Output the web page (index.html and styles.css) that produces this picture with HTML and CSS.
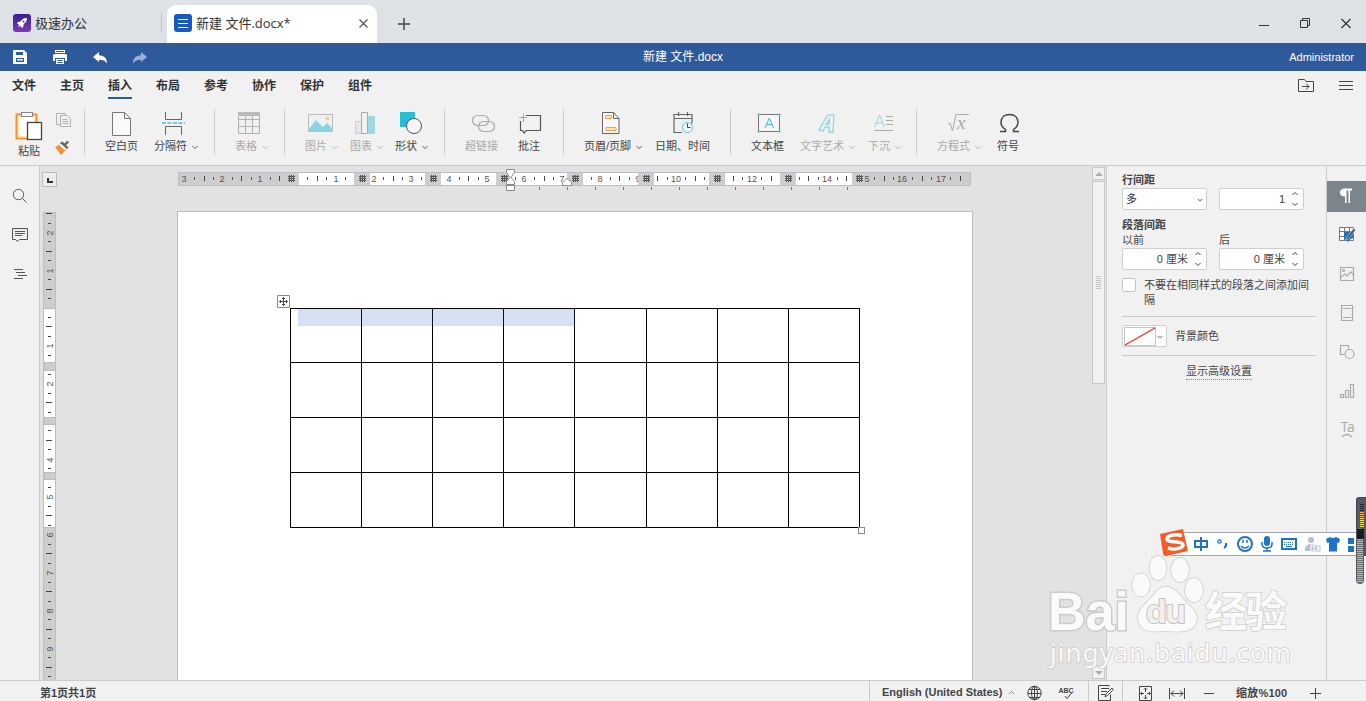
FILE: index.html
```html
<!DOCTYPE html>
<html lang="zh-CN">
<head>
<meta charset="utf-8">
<title>新建 文件.docx</title>
<link rel="stylesheet" href="styles.css">
</head>
<body>
<div class="app">
  <header class="titlebar">
    <div class="home-tab">
      <svg class="app-logo" viewBox="0 0 18 18"><defs><linearGradient id="pg" x2="0" y2="1"><stop stop-color="#3b1f8f"/><stop offset="1" stop-color="#7a3bb5"/></linearGradient></defs><rect width="18" height="18" rx="3" fill="url(#pg)"/><path d="M14 4c-3 0-5 1-6.500 3.500L5 8l-1 2 2 .3-.8 2.500L8 12l.2 2 2-1 .5-3C13 8.500 14 7 14 4z" fill="#fff"/><circle cx="10.500" cy="7.500" r="1" fill="#5a30a0"/></svg>
      <span>极速办公</span>
    </div>
    <div class="doc-tab">
      <svg class="app-logo" viewBox="0 0 18 18"><rect width="18" height="18" rx="3" fill="#185abd"/><path d="M4 5.500h10M4 9.500h10M4 13.500h10" stroke="#fff" stroke-width="1"/></svg>
      <span class="doc-name">新建 文件.docx*</span>
      <svg class="tab-close" viewBox="0 0 9 9"><path d="M.5.5l8 8M8.500.5l-8 8" stroke="#555" stroke-width="1.200"/></svg>
    </div>
    <svg class="tab-add" viewBox="0 0 12 12"><path d="M6 0v12M0 6h12" stroke="#444" stroke-width="1.500"/></svg>
    <svg class="window-buttons" viewBox="1250 10 116 28"><g fill="none" stroke="#333"><path d="M1259 25.500h10"/><path d="M1300.500 20.500h7v7h-7zM1302.500 20v-1.500h7v7h-2" /><path d="M1341.500 19l9 9M1350.500 19l-9 9" stroke-width="1.200"/></g></svg>
  </header>

  <div class="quickbar">
    <svg class="quick-icons" viewBox="0 43 160 28">
      <path fill="#fff" fill-rule="evenodd" d="M14 50h10l3 3v10q0 1-1 1H14q-1 0-1-1V51q0-1 1-1zm2 2v3h7v-3zm0 6v4h8v-4zM17 59h6v1.500h-6z"/>
      <path fill="#fff" fill-rule="evenodd" d="M55 50h10v3H55zM54 54h12l1 1v6h-2v-3H55v3h-2v-6zM56 59h8v5h-8z"/><path stroke="#2e5a9c" d="M57.500 60.500h5M57.500 62.500h5M56 51.500h8"/>
      <path fill="#fff" d="M93 57l6-5v3.200c5 .2 8 3 8 8-2-2.500-4-3.500-8-3.500V62z"/>
      <path fill="#9cb0d2" d="M147 57l-6-5v3.200c-5 .2-8 3-8 8 2-2.500 4-3.500 8-3.500V62z"/>
    </svg>
    <span class="quick-title">新建 文件.docx</span>
    <span class="user-name">Administrator</span>
  </div>

  <nav class="menu">
    <a>文件</a><a>主页</a><a class="active">插入</a><a>布局</a><a>参考</a><a>协作</a><a>保护</a><a>组件</a>
    <svg class="menu-icons" viewBox="1290 71 76 30"><g fill="none" stroke="#444"><path d="M1298.500 79.500h6l1.500 2h7.500v10h-15zM1302 86.500h7M1306 83.500l3 3-3 3M1339 81.500h14M1339 85.500h14M1339 89.500h14"/></g></svg>
  </nav>

  <div class="ribbon">
    <div class="tool paste">
      <svg viewBox="12 107 35 36"><path d="M16.500 114.500h20v24h-20z" fill="#fff" stroke="#ef9034" stroke-width="2"/><path d="M18.500 116.500h16v20h-16z" fill="none" stroke="#fbe3b0"/><rect x="21.500" y="112.500" width="11" height="4" fill="#f6f6f6" stroke="#888"/><rect x="27.500" y="122.500" width="14" height="17" fill="#fff" stroke="#444" stroke-width="1.300"/></svg>
      <span>粘贴</span>
    </div>
    <div class="mini-tools">
      <svg viewBox="54 106 20 54"><g fill="#f1f1f1" stroke="#b2b2b2"><path d="M56.500 113.500h9v11h-9z"/><path d="M60.500 115.500h7l3 3v8h-10zM62.500 119.500h5M62.500 121.500h6M62.500 123.500h6"/></g><path d="M55 147l4-2 6 6-4 4z" fill="#ef9034"/><path d="M59 145l2-2 6 5-2 3z" fill="#fff" stroke="#ef9034" stroke-width=".7"/><path d="M60 143l7 6 1.500-1.500-2.500-2.500 3-2.500-1.500-2-3 3-2-2z" fill="#666"/></svg>
    </div>
    <i class="sep"></i>
    <div class="tool w49"><svg viewBox="105 107 49 32"><path d="M112.500 112.500h12l6 6v17h-18zM124.500 112.500v6h6" fill="#fff" fill-opacity=".6" stroke="#777"/></svg><span>空白页</span></div>
    <div class="tool w60"><svg viewBox="154 107 60 32"><path d="M165.500 112v7.500h16v-7.500M165.500 135v-8.500h16v8.500" fill="none" stroke="#666"/><path d="M162 123h23" stroke="#73cbd8" stroke-width="2" stroke-dasharray="4 1.500"/></svg><span>分隔符<b></b></span></div>
    <i class="sep"></i>
    <div class="tool w49 off"><svg viewBox="235 107 49 32"><path d="M238.500 112.500h21v21h-21zM238.500 119.500h21M238.500 126.500h21M245.500 115v18M252.500 115v18" fill="none" stroke="#b0b0b0"/><path d="M238 112h22v4h-22z" fill="#bbb"/></svg><span>表格<b></b></span></div>
    <i class="sep"></i>
    <div class="tool w45 off"><svg viewBox="305 107 45 32"><path d="M308.500 114.500h24v17h-24z" fill="#eef2f2" stroke="#bababa"/><path d="M309 129l7-9 7 7 4-4 5 5v3h-23z" fill="#8dd5df"/><circle cx="327.500" cy="118.500" r="2" fill="#f7ca9c"/></svg><span>图片<b></b></span></div>
    <div class="tool w45 off"><svg viewBox="350 107 45 32"><path d="M355.500 121.500h6v12h-6z" fill="#e7e7e7" stroke="#ccc"/><path d="M361.500 112.500h6v21h-6z" fill="#f1f1f1" stroke="#aaa"/><path d="M368 116h7v18h-7z" fill="#9cdae2"/></svg><span>图表<b></b></span></div>
    <div class="tool w49"><svg viewBox="395 107 49 32"><path d="M400 112h15v15h-15z" fill="#27bdd5"/><circle cx="414" cy="126" r="7.500" fill="#f5f5f5" stroke="#555"/></svg><span>形状<b></b></span></div>
    <i class="sep"></i>
    <div class="tool w53 off"><svg viewBox="465 107 53 32"><g fill="none" stroke="#aaa" stroke-width="1.200"><rect x="472.500" y="115.500" width="16" height="10" rx="5"/><rect x="478.500" y="121.500" width="16" height="10" rx="5"/></g></svg><span>超链接</span></div>
    <div class="tool w45"><svg viewBox="518 107 45 32"><path d="M526 115.500h14.500v15h-14l-2.500 2.500-1.500-2.500h-2V121" fill="none" stroke="#555" stroke-width="1.200"/><path d="M523.500 114v8M519 117.500h8" stroke="#56c7d7"/></svg><span>批注</span></div>
    <i class="sep"></i>
    <div class="tool w71"><svg viewBox="584 107 71 32"><path d="M602.500 112.500h11l5.500 6v15h-16.500zM613.500 112.500v6h5.500" fill="#fff" fill-opacity=".5" stroke="#666"/><path d="M605.500 115.500h6v3h-6zM606 127.500h10v3h-10z" fill="#ffe8b5" stroke="#f0a24c"/></svg><span>页眉/页脚<b></b></span></div>
    <div class="tool w75"><svg viewBox="655 107 75 32"><path d="M682 132.500h-8v-18h18v9M674 118.500h18M678.500 112v4M687.500 112v4" fill="none" stroke="#666" stroke-width="1.200"/><circle cx="687.500" cy="127.500" r="5" fill="#f5f5f5" stroke="#56c7d7"/><path d="M687.500 123.500v4h3" fill="none" stroke="#444"/></svg><span>日期、时间</span></div>
    <i class="sep"></i>
    <div class="tool w49"><svg viewBox="751 107 49 32"><path d="M758.500 114.500h21v17h-21z" fill="#f5f5f5" stroke="#777"/><path d="M765 128l4.300-10 4.300 10M766.500 124.500h5.500" fill="none" stroke="#38bfd1"/><path d="M757.500 113.500h2v2h-2zM778.500 113.500h2v2h-2zM757.500 130.500h2v2h-2zM778.500 130.500h2v2h-2z" fill="#56c7d7"/></svg><span>文本框</span></div>
    <div class="tool w68 off"><svg viewBox="800 107 68 32"><path d="M819 130l8-14q4-2 7-1l-1 17h-4v-5h-4l-2 4zM826 124h3l.5-5z" fill="none" stroke="#93d8e1" stroke-width="1.300"/></svg><span>文字艺术<b></b></span></div>
    <div class="tool w49 off"><svg viewBox="868 107 49 32"><path d="M874.500 127l5-12 5 12M876 123h7" fill="none" stroke="#93d8e1"/><path d="M886 116.500h7M886 120.500h7M886 124.500h7M874 130.500h19" stroke="#aaa"/></svg><span>下沉<b></b></span></div>
    <i class="sep nudge"></i>
    <div class="tool w60 off"><svg viewBox="937 107 60 32"><path d="M948 124l2-1 2.500 8 3.500-16.500h13" fill="none" stroke="#aaa"/><text x="957" y="129" class="math">x</text></svg><span>方程式<b></b></span></div>
    <div class="tool w49"><svg viewBox="997 107 49 32"><path d="M1000 131.500h5.500v-2c-3-2-4.500-4-4.500-7 0-5 3.500-8 8.500-8s8.500 3 8.500 8c0 3-1.500 5-4.500 7v2h5.500" fill="none" stroke="#444" stroke-width="1.500"/></svg><span>符号</span></div>
  </div>

  <main class="workspace">
    <aside class="leftbar">
      <svg viewBox="0 166 39 130"><g fill="none" stroke="#555"><circle cx="18.500" cy="194.500" r="5.200"/><path d="M22.500 198.500l4 4"/><path d="M12.500 228.500h15v11h-8l-2 2-2-2h-3zM15 231.500h10M15 233.500h10M15 235.500h7M14 269.500h9M16 272.500h9M18 275.500h9M14 278.500h9"/></g></svg>
    </aside>

    <section class="canvas">
      <div class="corner"><svg viewBox="0 0 15 15"><path d="M.5.5h14v14H.5z" fill="#ededed" stroke="#bbb"/><path d="M6 6v4h5" fill="none" stroke="#333" stroke-width="2"/></svg></div>
      <svg class="ruler-h" viewBox="177 166 796 30" shape-rendering="crispEdges">
        <defs><path id="grid" d="M0 1.500h7M0 3.500h7M0 5.500h7M1.500 0v7M3.500 0v7M5.500 0v7" stroke="#555" fill="none"/></defs>
        <path d="M178 172h793v14H178z" fill="#cdcdcd"/><path d="M299 172h553v14H299z" fill="#fff"/>
        <path d="M194 178.500h770" stroke="#555" stroke-width="3" stroke-dasharray="1 17.900"/>
        <path d="M203.500 178.500h762" stroke="#444" stroke-width="5" stroke-dasharray="1 36.800"/>
        <g class="digits"><text x="184" y="182">3</text><text x="222" y="182">2</text><text x="260" y="182">1</text><text x="336" y="182">1</text><text x="374" y="182">2</text><text x="411" y="182">3</text><text x="449" y="182">4</text><text x="487" y="182">5</text><text x="524" y="182">6</text><text x="562" y="182">7</text><text x="600" y="182">8</text><text x="638" y="182">9</text><text x="676" y="182">10</text><text x="752" y="182">12</text><text x="827" y="182">14</text><text x="902" y="182">16</text><text x="941" y="182">17</text></g>
        <path d="M287 172h12v14h-12zM354 172h16v14h-16zM425 172h16v14h-16zM496 172h16v14h-16zM567 172h16v14h-16zM638 172h16v14h-16zM709 172h16v14h-16zM780 172h16v14h-16zM852 172h12v14h-12z" fill="#cdcdcd"/>
        <text class="digit" x="867" y="182">5</text>
        <g><use href="#grid" x="288" y="175"/><use href="#grid" x="359" y="175"/><use href="#grid" x="430" y="175"/><use href="#grid" x="501" y="175"/><use href="#grid" x="572" y="175"/><use href="#grid" x="643" y="175"/><use href="#grid" x="714" y="175"/><use href="#grid" x="785" y="175"/><use href="#grid" x="856" y="175"/></g>
        <path d="M178.500 172.500h792v13h-792z" fill="none" stroke="#bbbec2"/>
        <path d="M539 188.500h309" stroke="#777" stroke-width="3" stroke-dasharray="1 27"/>
        <g fill="#fff" stroke="#848c94" shape-rendering="auto"><path d="M506.500 169.500h8v3l-3.500 5 3.500 4v3h-8v-3l3.500-4-3.500-5zM506.500 185.500h8v5h-8zM562.500 185.500v-3l4.500-4 4.500 4v3z"/></g>
      </svg>
      <svg class="ruler-v" viewBox="43 212 14 469" shape-rendering="crispEdges">
        <path d="M43 212h13v469H43z" fill="#cdcdcd"/><path d="M44 309h11v218H44z" fill="#fff"/>
        <path d="M49 222.500v456" stroke="#444" stroke-width="3" stroke-dasharray="1 17.900"/>
        <path d="M49 213v456" stroke="#444" stroke-width="6" stroke-dasharray="1 36.800"/>
        <path d="M44 362h11v8H44zM44 417h11v7H44zM44 472h11v7H44z" fill="#cdcdcd" stroke="#bbbec2"/>
        <g class="digits"><text transform="translate(53 233) rotate(-90)">2</text><text transform="translate(53 271) rotate(-90)">1</text><text transform="translate(53 346) rotate(-90)">1</text><text transform="translate(53 384) rotate(-90)">2</text><text transform="translate(53 460) rotate(-90)">4</text><text transform="translate(53 497) rotate(-90)">5</text><text transform="translate(53 535) rotate(-90)">6</text><text transform="translate(53 573) rotate(-90)">7</text><text transform="translate(53 611) rotate(-90)">8</text><text transform="translate(53 649) rotate(-90)">9</text></g>
        <path d="M43.500 681V212.500h12V681M44 308.500h12M44 527.500h12" fill="none" stroke="#bbbec2"/>
      </svg>
      <div class="page">
        <div class="table">
          <div></div><div></div><div></div><div></div><div></div><div></div><div></div><div></div>
          <div></div><div></div><div></div><div></div><div></div><div></div><div></div><div></div>
          <div></div><div></div><div></div><div></div><div></div><div></div><div></div><div></div>
          <div></div><div></div><div></div><div></div><div></div><div></div><div></div><div></div>
          <span class="selection"></span>
          <svg class="move-handle" viewBox="0 0 13 13"><path d="M.5.5h12v12H.5z" fill="#fff" stroke="#888"/><path d="M6.500 2.500v8M2.500 6.500h8M5 4l1.500-1.500L8 4M5 9l1.500 1.500L8 9M4 5L2.500 6.500 4 8M9 5l1.500 1.500L9 8" fill="none" stroke="#444"/></svg>
          <span class="size-handle"></span>
        </div>
      </div>
      <div class="scrollbar">
        <div class="scroll-btn"><svg viewBox="0 0 8 4"><path d="M0 4l4-4 4 4z" fill="#adadad"/></svg></div>
        <div class="thumb"><i></i></div>
        <div class="scroll-btn"><svg viewBox="0 0 8 4"><path d="M0 0l4 4 4-4z" fill="#adadad"/></svg></div>
      </div>
    </section>

    <aside class="panel">
      <h3>行间距</h3>
      <div class="fields"><div class="field select"><span>多</span><b></b></div><div class="field spin"><span>1</span><svg viewBox="0 0 6 14"><path d="M.5 3L3 .5 5.500 3M.5 11L3 13.500 5.500 11" fill="none" stroke="#444"/></svg></div></div>
      <h3 class="second">段落间距</h3>
      <div class="field-labels"><span>以前</span><span>后</span></div>
      <div class="fields"><div class="field spin"><span>0 厘米</span><svg viewBox="0 0 6 14"><path d="M.5 3L3 .5 5.500 3M.5 11L3 13.500 5.500 11" fill="none" stroke="#444"/></svg></div><div class="field spin"><span>0 厘米</span><svg viewBox="0 0 6 14"><path d="M.5 3L3 .5 5.500 3M.5 11L3 13.500 5.500 11" fill="none" stroke="#444"/></svg></div></div>
      <div class="check"><i></i><span>不要在相同样式的段落之间添加间隔</span></div>
      <div class="color-row"><div class="color"><svg viewBox="0 0 32 19"><path d="M.5.5h31v18H.5z" fill="#fff" stroke="#c4c4c4"/><path d="M1 18L31 1" stroke="#f22" stroke-width="1.200"/></svg><b></b></div><span>背景颜色</span></div>
      <div class="advanced"><span>显示高级设置</span></div>
    </aside>

    <aside class="rightbar">
      <svg viewBox="1327 166 39 300">
        <path d="M1327 181h39v31h-39z" fill="#7d858c"/><path d="M1352 188.500h-7c-3 0-5 1.500-5 4s2 4 5 4V203h1.500v-12.500h2V203h1.500v-12.500h2z" fill="#fff"/>
        <path d="M1339.500 227.500h14v13h-14zM1339.500 231.500h14M1339.500 236.500h14M1344.500 227v13M1349.500 227v13" fill="#fafafa" stroke="#777"/><path d="M1344 232h9v6l-4 2-1 2-4-3z" fill="#1c73c4"/><path d="M1354 228l1.500 2-7 9-3 1 1.500-3z" fill="#555" stroke="#f1f1f1" stroke-width=".5"/>
        <g fill="none" stroke="#aaa" stroke-width="1.200"><path d="M1340.500 267.500h13v13h-13zM1341 277l4-3 2 2 4-4 3 4"/><circle cx="1343.500" cy="270.500" r="1"/><path d="M1341.500 305.500h11v15h-11zM1343 308.500h8M1343 317.500h8"/><path d="M1344 354.500h-3.500v-9h8v3"/><circle cx="1349.500" cy="354" r="4.500"/><path d="M1340.500 394.500h3v3h-3zM1345.500 390.500h3v7h-3zM1350.500 384.500h3v13h-3z"/><path d="M1342 437q5-5 10 0"/></g><text class="ta" x="1340.500" y="432">Ta</text>
      </svg>
    </aside>
  </main>

  <footer class="status">
    <span class="page-count">第1页共1页</span>
    <span class="language">English (United States)</span>
    <svg class="status-icons" viewBox="1004 681 224 20"><g fill="none" stroke="#444"><path d="M1009 694l2.500-2.500 2.500 2.500" stroke="#888"/><circle cx="1034.500" cy="693" r="6.700"/><ellipse cx="1034.500" cy="693" rx="3" ry="6.700"/><path d="M1028 693.500h13M1034.500 686v14M1029 689.500h11M1029 697.500h11"/><path d="M1065 696l2 2.500 5-6"/><path d="M1109 686.500v-1h-10.500v15h12v-6M1101 688.500h8M1101 691.500h6M1101 694.500h4"/><path d="M1105 697l1-3 6-6 1.500 1.500-6 6z"/><path d="M1139.500 686.500h12v14h-12zM1145.500 688v4M1145.500 695v4M1141 693.500h3M1147 693.500h3M1144 689.500l1.500-1.500 1.500 1.500M1144 697.500l1.500 1.500 1.500-1.500M1142 692l-1.500 1.500 1.500 1.500M1149 692l1.500 1.500-1.500 1.500"/><path d="M1169.500 688v11M1184.500 688v11M1171 693.500h12M1174 690.500l-3 3 3 3M1180 690.500l3 3-3 3M1204 693.500h10"/></g><path d="M1088.500 681v20M1122.500 681v20" stroke="#cbcbcb"/><text class="abc" x="1058.500" y="693">ABC</text></svg>
    <span class="zoom-level">缩放%100</span>
    <svg class="zoom-in" viewBox="0 0 11 11"><path d="M5.500 0v11M0 5.500h11" stroke="#444"/></svg>
  </footer>

  <svg class="watermark" viewBox="1040 550 260 125">
    <g class="mark">
      <text x="1048" y="630" textLength="81" lengthAdjust="spacingAndGlyphs" class="bai">Bai</text>
      <ellipse cx="1141" cy="585" rx="9" ry="11.500"/><ellipse cx="1158" cy="568" rx="8.500" ry="12"/><ellipse cx="1180" cy="570" rx="9" ry="12"/><ellipse cx="1194" cy="590" rx="9" ry="12"/><path d="M1166 587c-9 0-11 8-19 15-8 7-11 14-8 21 4 10 15 9 27 8 12 1 23 2 29-6 5-8 0-15-8-22-8-8-11-16-21-16z"/>
      <text x="1205" y="627" textLength="82" class="exp">经验</text>
      <text x="1050" y="662" textLength="241" class="url">jingyan.baidu.com</text>
    </g>
    <text x="1146" y="623" textLength="40" class="du">du</text>
  </svg>

  <svg class="ime" viewBox="1155 495 211 95">
    <path d="M1172 532.500h194v23h-194z" fill="#fff" stroke="#a2a6b4"/>
    <path d="M1160 534l23-5 5 22-22 5q-3 0-3-3z" fill="#f65b25"/><path d="M1182 535.500c-7-2-15 0-15 3.500 0 4 16 1.500 16 6 0 3.500-9 5-15 3" fill="none" stroke="#fff" stroke-width="3.500"/>
    <g fill="none" stroke="#1e73c8" stroke-width="2"><path d="M1195 541h12v6h-12zM1201 537v14"/><circle cx="1219.500" cy="541.500" r="1.700" stroke-width="1.300"/><path d="M1226 543q1 3-2 5"/><circle cx="1245" cy="544" r="7"/><path d="M1241 546q4 4 8 0M1243 540v3M1247 540v3" stroke-width="1.500"/><path d="M1262 542v2q0 4 5 4t5-4v-2M1267 548v3M1263 551h8" stroke-width="1.500"/><path d="M1282 539h14v10h-14z"/><path d="M1284 542.500h10M1284 544.500h10" stroke-width="1" stroke-dasharray="1 1"/><path d="M1286 546.500h6" stroke-width="1"/></g>
    <rect x="1264" y="536" width="6" height="10" rx="3" fill="#1e73c8"/><g fill="#b6c0d3"><circle cx="1311" cy="540" r="3"/><path d="M1305 551v-4l4-3h5l3 3v4z"/><rect x="1311" y="545" width="10" height="7" stroke="#fff"/></g><text x="1312" y="551" class="nineteen">19</text>
    <path d="M1326 539l4-2q3 2 6 0l4 2-1 4-2-.5v9h-8v-9l-2 .5zM1348 538h6v6h-6zM1348 546h6v6h-6z" fill="#1e73c8"/>
    <rect x="1356.500" y="497.500" width="15" height="58" rx="2" fill="#555965" stroke="#42454e"/><path d="M1362 504v8" stroke="#252830" stroke-width="4" stroke-dasharray="1 1"/><path d="M1362 512v7" stroke="#f5a94d" stroke-width="4" stroke-dasharray="1 1"/><path d="M1362 518v10" stroke="#f2e04c" stroke-width="4" stroke-dasharray="1 1"/><path d="M1362 528v26" stroke="#437c3a" stroke-width="4" stroke-dasharray="1 1"/>
    <rect x="1356.500" y="527.500" width="7" height="56" rx="3" fill="#6e6e73" stroke="#565961"/><path d="M1357 529h7v10h-7z" fill="#181b20"/><path d="M1360 539v43" stroke="#f2aa4d" stroke-width="6" stroke-dasharray="1 1"/>
  </svg>
</div>
</body>
</html>
```
FILE: styles.css
```css
* { box-sizing: border-box; }
body { margin: 0; overflow: hidden; background: #f1f1f1; color: #444; font: 11px/15px "Liberation Sans", "Noto Sans CJK SC", sans-serif; }
.app { position: relative; width: 1366px; height: 701px; display: flex; flex-direction: column; overflow: hidden; }
svg { display: block; flex: none; }
.titlebar { height: 43px; flex: none; display: flex; background: #dee1e6; font-family: "Open Sans", "Noto Sans CJK SC", sans-serif; font-size: 13px; color: #333; }
.home-tab { width: 162px; height: 20px; margin: 13px 5px 0 0; padding-left: 13px; display: flex; align-items: center; gap: 4px; border-right: 1px solid #bfc2c7; }
.app-logo { width: 18px; height: 18px; }
.doc-tab { width: 210px; margin-top: 5px; padding: 0 9px 2px 7px; display: flex; align-items: center; gap: 4px; background: #fff; border-radius: 9px 9px 0 0; white-space: nowrap; }
.doc-name { flex: 1; }
.tab-close { width: 9px; height: 9px; }
.tab-add { width: 12px; height: 12px; margin: 18px 0 0 21px; }
.window-buttons { width: 116px; height: 28px; margin: 10px 0 0 auto; }
.quickbar { height: 28px; flex: none; display: grid; grid-template-columns: 1fr auto 1fr; align-items: center; background: #2e5a9c; color: #fff; font-size: 12px; }
.quick-icons { width: 160px; height: 28px; }
.user-name { justify-self: end; padding-right: 12px; font-size: 11px; }
.menu { height: 32px; flex: none; display: flex; gap: 24px; padding-left: 12px; }
.menu a { width: 24px; height: 28px; padding-top: 7px; color: #333; font-size: 12px; line-height: 16px; font-weight: bold; white-space: nowrap; }
.menu .active { border-bottom: 2px solid #2e5a9c; }
.menu-icons { width: 76px; height: 30px; margin-left: auto; }
.ribbon { height: 63px; flex: none; display: flex; padding: 4px 0 0 12px; border-bottom: 1px solid #cbcbcb; }
.tool { flex: none; white-space: nowrap; }
.tool svg { width: 100%; height: 32px; }
.tool span { display: flex; align-items: center; line-height: 15px; gap: 5px; }
.paste { width: 42px; }
.tool.paste svg { width: 35px; height: 36px; }
.paste span { padding: 1px 0 0 6px; }
.mini-tools { width: 30px; }
.mini-tools svg { width: 20px; height: 54px; margin-top: -1px; }
.sep { width: 1px; height: 46px; margin: 2px 20px 0 0; flex: none; background: #cbcbcb; }
.sep.nudge { margin-left: -1px; }
.w45 { width: 45px; } .w49 { width: 49px; } .w53 { width: 53px; } .w60 { width: 60px; } .w68 { width: 68px; } .w71 { width: 71px; } .w75 { width: 75px; }
.off { color: #aaa; }
b { width: 6px; height: 3px; background: currentColor; opacity: .75; clip-path: polygon(0 0, 16% 0, 50% 68%, 84% 0, 100% 0, 100% 12%, 50% 100%, 0 12%); transform: translateY(1px); }
.math { font: italic 19px "Liberation Serif", serif; fill: #aaa; }
.workspace { height: 514px; flex: none; display: flex; }
.leftbar { width: 40px; border-right: 1px solid #cbcbcb; }
.leftbar svg { width: 39px; height: 130px; }
.canvas { width: 1066px; display: grid; grid-template: 45px 469px / 137px 1fr 15px; background: #e2e2e2; overflow: hidden; }
.corner { padding: 6px 0 0 2px; }
.corner svg { width: 15px; height: 15px; }
.ruler-h { width: 796px; height: 30px; }
.ruler-v { grid-row: 2; grid-column: 1; width: 14px; height: 469px; margin: 1px 0 0 3px; }
.digits text, .digit { font: 9px "Liberation Sans", sans-serif; fill: #555; text-anchor: middle; }
.page { grid-row: 2; grid-column: 2; width: 796px; padding: 96px 0 0 112px; background: #fff; border: 1px solid #bbbec2; border-bottom: 0; }
.table { position: relative; width: 570px; height: 220px; display: grid; grid-template: 54px 55px 55px 55px / 71px 71px 71px 71px 72px 71px 71px 71px; border: solid #000; border-width: 0 1px 1px 0; }
.table > div { border: solid #000; border-width: 1px 0 0 1px; }
.selection { position: absolute; left: 8px; top: 1px; width: 277px; height: 17px; background: rgba(45, 100, 200, .2); }
.move-handle { position: absolute; left: -13px; top: -13px; width: 13px; height: 13px; }
.size-handle { position: absolute; left: 568px; top: 219px; width: 7px; height: 7px; border: 1px solid #888; background: #fff; }
.scrollbar { grid-row: 1 / 3; grid-column: 3; padding: 1px; display: flex; flex-direction: column; }
.scroll-btn { width: 13px; height: 13px; display: grid; place-items: center; border: 1px solid #c9c9c9; background: #f1f1f1; }
.scroll-btn svg { width: 8px; height: 4px; }
.thumb { height: 203px; margin: 1px 0 auto; border: 1px solid #c9c9c9; background: #f1f1f1; display: grid; place-items: center; }
.thumb i { width: 5px; height: 13px; background: repeating-linear-gradient(#c5c5c5 0 1px, transparent 1px 2px); }
.panel { width: 221px; padding: 7px 10px 0 15px; border: solid #cbcbcb; border-width: 0 1px; }
.panel h3 { margin: 0; font-size: 11px; line-height: 15px; }
.panel h3.second { margin-top: 8px; }
.fields { display: flex; gap: 12px; }
.field { width: 85px; height: 22px; display: flex; align-items: center; border: 1px solid #cfcfcf; border-radius: 2px; background: #fff; }
.select { justify-content: space-between; padding: 0 3px; color: #333; }
.spin { justify-content: flex-end; gap: 7px; padding-right: 5px; }
.spin svg { width: 6px; height: 14px; }
.field-labels { display: grid; grid-template-columns: 97px 1fr; height: 15px; }
.check { display: flex; gap: 8px; height: 47px; padding-top: 8px; border-bottom: 1px solid #cbcbcb; }
.check i { width: 14px; height: 14px; flex: none; border: 1px solid #c4c4c4; border-radius: 2px; background: #fff; }
.check span { width: 170px; }
.color-row { display: flex; align-items: center; gap: 8px; height: 39px; border-bottom: 1px solid #cbcbcb; }
.color { width: 45px; height: 22px; padding: 1px 3px 1px 1px; display: flex; align-items: center; justify-content: space-between; background: #fff; border: 1px solid #cfcfcf; border-radius: 2px; }
.color svg { width: 32px; height: 19px; }
.advanced { padding-top: 8px; text-align: center; }
.advanced span { display: inline-block; border-bottom: 1px dotted #888; }
.rightbar { width: 39px; }
.rightbar svg { width: 39px; height: 300px; }
.ta { font: 14px "Open Sans", sans-serif; fill: #aaa; letter-spacing: -1.2px; }
.status { height: 21px; flex: none; display: flex; align-items: center; border-top: 1px solid #cbcbcb; font-weight: bold; white-space: nowrap; padding-top: 4px; }
.page-count { width: 869px; padding-left: 40px; }
.language { width: 135px; margin-top: -4px; padding: 5px 0 2px 12px; border-left: 1px solid #cbcbcb; font-size: 11px; }
.status-icons { width: 224px; height: 20px; margin-top: -4px; }
.abc { font: bold 7px "Liberation Sans", sans-serif; fill: #444; }
.zoom-level { width: 82px; padding-left: 8px; letter-spacing: .2px; }
.zoom-in { width: 11px; height: 11px; }
.watermark { position: absolute; left: 1040px; top: 550px; width: 260px; height: 125px; }
.mark { fill: #fafafa; stroke: #ccc; stroke-width: 1.5px; paint-order: stroke; }
.bai { font: bold 54px "Liberation Sans", sans-serif; stroke-width: 3px; }
.exp { font: bold 42px "Noto Sans CJK SC", sans-serif; }
.url { font: 26px "Noto Sans", sans-serif; }
.du { font: bold 34px "Liberation Sans", sans-serif; fill: #f0f0f0; stroke: #c4c4c4; stroke-width: 2px; paint-order: stroke; }
.ime { position: absolute; left: 1155px; top: 495px; width: 211px; height: 95px; }
.nineteen { font: bold 7px "Liberation Sans", sans-serif; fill: #fff; }
```
